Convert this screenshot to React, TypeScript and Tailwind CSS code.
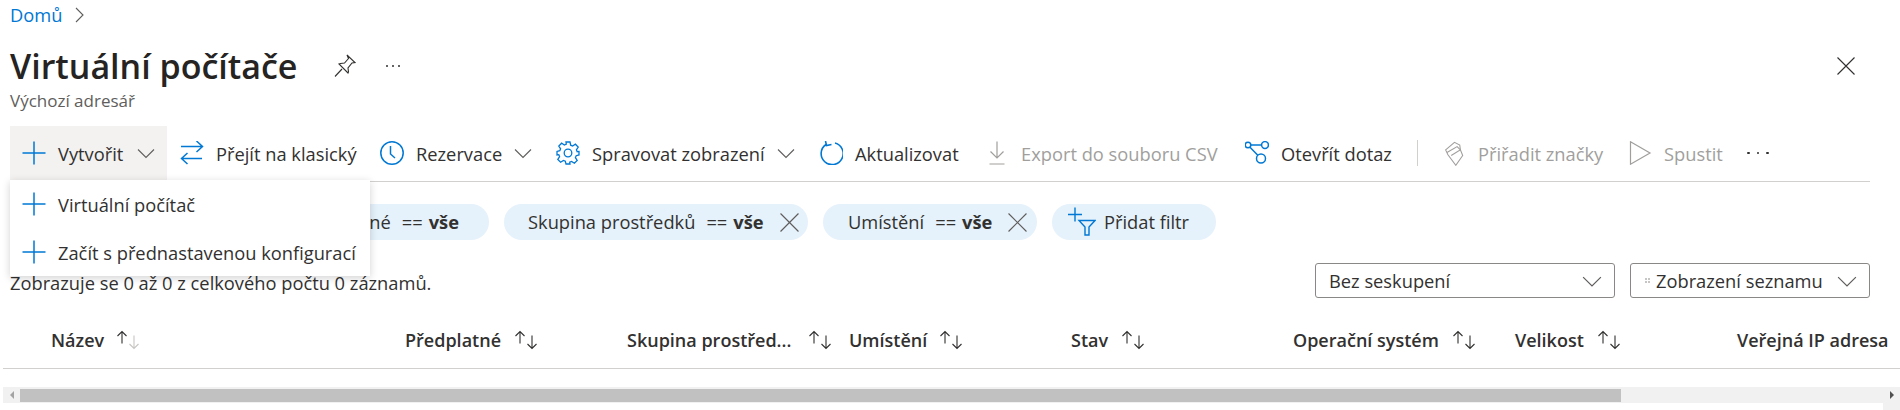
import { ReactNode } from "react";

const BLUE = "#0078d4";

function Plus() {
  return (
    <svg width="24" height="24" viewBox="0 0 24 24" fill="none" stroke={BLUE} strokeWidth="1.5">
      <path d="M0.5 12h23M12 0.5v23" />
    </svg>
  );
}

function Chevron({ size = 18, color = "#605e5c" }: { size?: number; color?: string }) {
  return (
    <svg width={size} height={size} viewBox="0 0 18 18" fill="none" stroke={color} strokeWidth="1.1">
      <path d="M1 5.5l8 8 8-8" />
    </svg>
  );
}

function Close({ size = 18, color = "#323130" }: { size?: number; color?: string }) {
  return (
    <svg width={size} height={size} viewBox="0 0 18 18" fill="none" stroke={color} strokeWidth="1.1">
      <path d="M0.5 0.5l17 17M17.5 0.5l-17 17" />
    </svg>
  );
}

function SwapIcon() {
  return (
    <svg width="24" height="24" viewBox="0 0 24 24" fill="none" stroke={BLUE} strokeWidth="1.5">
      <path d="M1 5.500h21.500M16.500 0l6 5.500-6 5.500" />
      <path d="M22 17.500H1.500M7.500 12l-6 5.500 6 5.500" />
    </svg>
  );
}

function ClockIcon() {
  return (
    <svg width="24" height="24" viewBox="0 0 24 24" fill="none" stroke={BLUE} strokeWidth="1.5">
      <circle cx="12" cy="12" r="11.200" />
      <path d="M10.500 5v8l4.500 4" />
    </svg>
  );
}

function GearIcon() {
  return (
    <svg width="24" height="24" viewBox="0 0 24 24" fill="none" stroke={BLUE} strokeWidth="1.3">
      <circle cx="12" cy="12" r="3.800" />
      <path d="M10 1h4l.7 3.200 1.900.8 2.800-1.800 2.800 2.800-1.800 2.800.8 1.900L23 10.400v3.600l-2.800.7-.8 1.900 1.800 2.800-2.800 2.800-2.800-1.800-1.900.8L14 23h-4l-.7-2.800-1.900-.8-2.800 1.800-2.800-2.800 1.800-2.800-.8-1.900L1 14v-3.600l2.800-.7.800-1.900L2.800 5 5.600 2.200l2.800 1.800 1.900-.8z" />
    </svg>
  );
}

function RefreshIcon() {
  return (
    <svg width="24" height="24" viewBox="0 0 24 24" fill="none" stroke={BLUE} strokeWidth="1.6">
      <path d="M7 3.500A11 11 0 1 0 16 2M6.500 0l1 4.500 5-1" />
    </svg>
  );
}

function DownloadIcon() {
  return (
    <svg width="24" height="24" viewBox="0 0 24 24" fill="none" stroke="#a19f9d" strokeWidth="1.2">
      <path d="M12 0.500v16M5.500 10.500l6.500 6.500 6.500-6.500M4.500 23h15" />
    </svg>
  );
}

function QueryIcon() {
  return (
    <svg width="24" height="24" viewBox="0 0 24 24" fill="none" stroke={BLUE} strokeWidth="1.5">
      <circle cx="3" cy="4" r="2.800" />
      <circle cx="20" cy="4" r="3.400" />
      <circle cx="16" cy="17.500" r="4.500" />
      <path d="M5.800 4h10.800M5 6.200l7.800 8" />
    </svg>
  );
}

function TagIcon() {
  return (
    <svg width="19" height="25" viewBox="33 28 58 76" fill="none" stroke="#a19f9d" strokeWidth="3.300">
      <path d="M52 72L80 55l7 17-21 30-24-32-7-15 27-23 16 8 2 15" />
      <path d="M39 63l31-18 10 10" />
    </svg>
  );
}

function PlayIcon() {
  return (
    <svg width="24" height="24" viewBox="0 0 24 24" fill="none" stroke="#a19f9d" strokeWidth="1.2">
      <path d="M2.500 0.800L22 12 2.500 23.200z" />
    </svg>
  );
}

function SortArrows({ faded = false }: { faded?: boolean }) {
  return (
    <svg width="25" height="20" viewBox="0 0 25 20" fill="none" strokeWidth="1.1" className="shrink-0">
      <path d="M7 1.500v12M2.500 6l4.500-4.500L11.500 6" stroke="#323130" />
      <path d="M19 5.500v13M14.500 14l4.500 4.500 4.500-4.500" stroke={faded ? "#c8c6c4" : "#323130"} />
    </svg>
  );
}

function FilterPlus() {
  return (
    <svg width="28" height="30" viewBox="0 0 28 30" fill="none" stroke={BLUE} strokeWidth="1.4">
      <path d="M0 7.500h14M7 0.500v14" />
      <path d="M11 13.500h16l-6 6.500v8h-4v-8z" />
    </svg>
  );
}

type ToolProps = {
  icon: ReactNode;
  label: string;
  className: string;
  disabled?: boolean;
  chevron?: boolean;
};

function ToolItem({ icon, label, className, disabled, chevron }: ToolProps) {
  return (
    <div className={`flex h-full shrink-0 items-center pr-3 ${className}`}>
      <span className="mr-3 flex w-6 shrink-0 justify-center">{icon}</span>
      <span className={`mt-[2px] whitespace-nowrap ${disabled ? "text-[#a19f9d]" : "text-[#323130]"}`}>{label}</span>
      {chevron && (
        <span className="ml-auto">
          <Chevron />
        </span>
      )}
    </div>
  );
}

function ChipText({ name }: { name: string }) {
  return (
    <>
      {name}
      <span className="ml-[11px]">==</span>
      <b className="ml-[6px] font-bold">vše</b>
    </>
  );
}

const columns: { label: string; faded?: boolean; noSort?: boolean; gap: string; width: string }[] = [
  { label: "Název", faded: true, gap: "mr-[11px]", width: "w-[402px] pl-[48px]" },
  { label: "Předplatné", gap: "mr-[12px]", width: "w-[222px]" },
  { label: "Skupina prostřed...", gap: "mr-[16px]", width: "w-[222px]" },
  { label: "Umístění", gap: "mr-[11px]", width: "w-[222px]" },
  { label: "Stav", gap: "mr-[12px]", width: "w-[222px]" },
  { label: "Operační systém", gap: "mr-[12px]", width: "w-[222px]" },
  { label: "Velikost", gap: "mr-[12px]", width: "w-[222px]" },
  { label: "Veřejná IP adresa", noSort: true, gap: "", width: "w-[160px]" },
];

export default function App() {
  return (
    <div className="relative h-[410px] w-[1900px] overflow-hidden bg-white font-['Open_Sans',sans-serif] text-[18.300px] text-[#323130]">
      {/* breadcrumb */}
      <div className="flex h-[30px] items-center pl-[10px]">
        <span className="text-[#0078d4]">Domů</span>
        <svg width="10" height="16" viewBox="0 0 10 16" fill="none" stroke="#605e5c" strokeWidth="1.1" className="ml-[13px]">
          <path d="M1 1l7 7-7 7" />
        </svg>
      </div>

      {/* title */}
      <div className="mt-[11px] flex h-[50px] items-center pl-[10px] pr-[45px]">
        <h1 className="w-[320px] whitespace-nowrap text-[34px] font-semibold text-[#252423]">Virtuální počítače</h1>
        <svg width="22" height="24" viewBox="0 0 22 24" fill="none" stroke="#323130" strokeWidth="1.1" className="ml-[4px]">
          <path d="M13 1l8 7.500-3 .5-4 5 .5 4L14 19l-9-9 1.500-.5 4-.5 4-4.500z" />
          <path d="M8 15l-7 7.500" />
        </svg>
        <div className="ml-[30px] flex gap-[4px]">
          <span className="size-[2px] rounded-full bg-[#323130]" />
          <span className="size-[2px] rounded-full bg-[#323130]" />
          <span className="size-[2px] rounded-full bg-[#323130]" />
        </div>
        <span className="ml-auto">
          <Close />
        </span>
      </div>
      <div className="mt-px h-[18px] pl-[10px] text-[17px] leading-[18px] text-[#605e5c]">Výchozí adresář</div>

      {/* toolbar */}
      <div className="ml-[10px] mt-4 flex h-[56px] w-[1860px] items-center border-b border-[#d2d0ce] pb-px">
        <ToolItem icon={<Plus />} label="Vytvořit" className="w-[157px] bg-[#f3f2f1] pl-3" chevron />
        <ToolItem icon={<SwapIcon />} label="Přejít na klasický" className="w-[201px] pl-[13px]" />
        <ToolItem icon={<ClockIcon />} label="Rezervace" className="w-[176px] pl-3" chevron />
        <ToolItem icon={<GearIcon />} label="Spravovat zobrazení" className="w-[263px] pl-3" chevron />
        <ToolItem icon={<RefreshIcon />} label="Aktualizovat" className="w-[170px] pl-3" />
        <ToolItem icon={<DownloadIcon />} label="Export do souboru CSV" className="w-[256px] pl-2" disabled />
        <ToolItem icon={<QueryIcon />} label="Otevřít dotaz" className="w-[172px] pl-3" />
        <div className="mx-3 h-[26px] w-px bg-[#d2d0ce]" />
        <ToolItem icon={<TagIcon />} label="Přiřadit značky" className="w-[186px] pl-3" disabled />
        <ToolItem icon={<PlayIcon />} label="Spustit" className="w-[119px] pl-3" disabled />
        <div className="ml-3 flex gap-[7px]">
          <span className="size-[2.500px] rounded-full bg-[#323130]" />
          <span className="size-[2.500px] rounded-full bg-[#323130]" />
          <span className="size-[2.500px] rounded-full bg-[#323130]" />
        </div>
      </div>

      {/* filter chips */}
      <div className="ml-[245px] mt-[22px] flex h-9 gap-[15px] whitespace-nowrap">
        <div className="flex w-[244px] items-center justify-end overflow-hidden rounded-full bg-[#e5f1fb] pr-[30px]">
          <ChipText name="Předplatné" />
        </div>
        <div className="flex w-[304px] items-center rounded-full bg-[#e5f1fb] pl-6">
          <ChipText name="Skupina prostředků" />
          <span className="ml-auto mr-[9px]">
            <Close size={19} color="#605e5c" />
          </span>
        </div>
        <div className="flex w-[214px] items-center rounded-full bg-[#e5f1fb] pl-[25px]">
          <ChipText name="Umístění" />
          <span className="ml-auto mr-[10px]">
            <Close size={19} color="#605e5c" />
          </span>
        </div>
        <div className="flex w-[164px] items-center rounded-full bg-[#e5f1fb] pl-4">
          <FilterPlus />
          <span className="ml-2">Přidat filtr</span>
        </div>
      </div>

      {/* status + group selects */}
      <div className="mt-[23px] flex h-[35px] pl-[10px] pr-[30px]">
        <span className="mt-[9px] leading-[22px]">Zobrazuje se 0 až 0 z celkového počtu 0 záznamů.</span>
        <div className="ml-auto flex w-[300px] items-center justify-between rounded-[3px] border border-[#8a8886] pl-[13px] pr-[12px]">
          Bez seskupení
          <Chevron size={20} />
        </div>
        <div className="ml-[15px] flex w-[240px] items-center rounded-[3px] border border-[#8a8886] pl-[14px] pr-[12px]">
          <span className="mr-[6px] grid grid-cols-2 gap-px">
            <span className="size-[2px] bg-[#c8c6c4]" />
            <span className="size-[2px] bg-[#c8c6c4]" />
            <span className="size-[2px] bg-[#c8c6c4]" />
            <span className="size-[2px] bg-[#c8c6c4]" />
          </span>
          <span className="whitespace-nowrap">Zobrazení seznamu</span>
          <span className="ml-auto">
            <Chevron size={20} />
          </span>
        </div>
      </div>

      {/* table header */}
      <div className="ml-[3px] flex h-[71px] items-center border-b border-[#d2d0ce] pt-[13px] text-[18px] font-semibold">
        {columns.map((col) => (
          <div key={col.label} className={`flex shrink-0 items-center whitespace-nowrap ${col.width}`}>
            <span className={`mt-[2px] ${col.gap}`}>{col.label}</span>
            {!col.noSort && <SortArrows faded={col.faded} />}
          </div>
        ))}
      </div>

      {/* horizontal scrollbar */}
      <div className="ml-[3px] mt-[18px] flex h-4 items-start bg-[#f1f1f1]">
        <div className="flex h-full w-[17px] items-center justify-center">
          <span className="h-0 w-0 border-y-[4px] border-r-[4px] border-y-transparent border-r-[#a3a3a3]" />
        </div>
        <div className="mt-[2px] h-[13px] w-[1601px] bg-[#c1c1c1]" />
        <div className="ml-auto flex h-full w-[17px] items-center justify-center">
          <span className="h-0 w-0 border-y-[4px] border-l-[4px] border-y-transparent border-l-[#505050]" />
        </div>
      </div>
      <div className="ml-auto h-[7px] w-[17px] bg-[#f1f1f1]" />

      {/* Vytvořit menu */}
      <div className="absolute left-[10px] top-[180px] flex h-[96px] w-[360px] flex-col whitespace-nowrap bg-white shadow-[0_2px_8px_rgba(0,0,0,0.18)]">
        <div className="flex h-12 items-center pl-3">
          <span className="mr-3 flex w-6 justify-center">
            <Plus />
          </span>
          <span className="mt-[2px]">Virtuální počítač</span>
        </div>
        <div className="flex h-12 items-center pl-3">
          <span className="mr-3 flex w-6 justify-center">
            <Plus />
          </span>
          <span className="mt-[2px]">Začít s přednastavenou konfigurací</span>
        </div>
      </div>
    </div>
  );
}
